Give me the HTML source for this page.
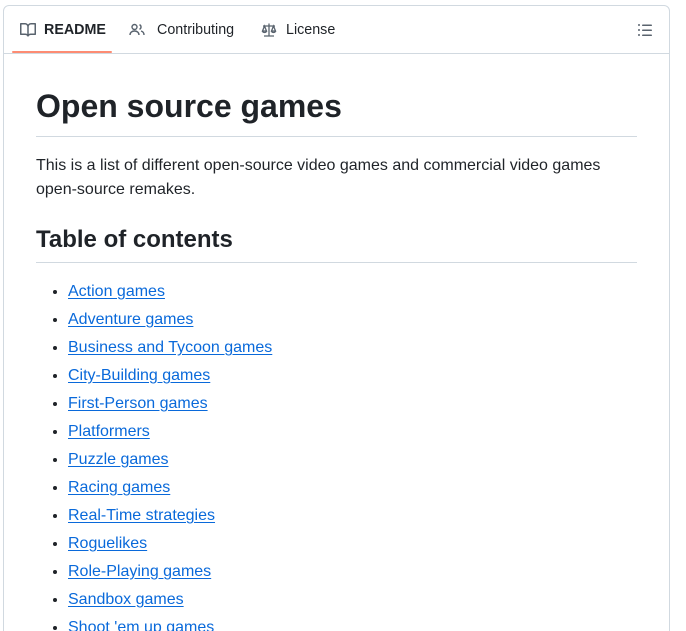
<!DOCTYPE html>
<html style="height:631px;overflow:hidden"><head><style>
body{margin:0;background:#fff;font-family:"Liberation Sans",sans-serif;color:#1f2328;height:631px;overflow:hidden;position:relative}
.box{position:absolute;left:3px;top:5px;width:665px;height:640px;border:1px solid #d1d9e0;border-radius:6px;}
.hdr{height:47px;border-bottom:1px solid #d1d9e0;position:relative;}
.tab{position:absolute;top:0;height:47px;display:flex;align-items:center;font-size:14.3px;color:#1f2328;}
.tab svg{margin-right:8px}
.ul{position:absolute;left:8px;top:45px;width:100px;height:2px;background:#fd8c73;border-radius:2px}
h1{position:absolute;left:32px;top:80px;margin:0;font-size:32px;font-weight:600;width:601px;border-bottom:1px solid #d1d9e0;height:50px;line-height:40px}
p{position:absolute;left:32px;top:148px;margin:0;font-size:16px;line-height:24px;width:601px}
h2{position:absolute;left:32px;top:219px;margin:0;font-size:24px;font-weight:600;width:601px;border-bottom:1px solid #d1d9e0;height:37px;line-height:30px}
ul{position:absolute;left:32px;top:272px;margin:0;padding-left:32px;font-size:16px;line-height:28px}
a{color:#0969da;text-decoration:underline;text-underline-offset:2px}
</style></head><body>
<div class="box">
<div class="hdr">
<div class="tab" style="left:16px;font-weight:700"><svg width="16" height="16" viewBox="0 0 16 16" fill="#59636e"><path d="M0 1.75A.75.75 0 0 1 .75 1h4.25c1.2 0 2.27.57 3 1.44A3.74 3.74 0 0 1 11 1h4.25a.75.75 0 0 1 .75.75v10.5a.75.75 0 0 1-.75.75h-4.51a2.25 2.25 0 0 0-2.120 1.5h-1.24A2.25 2.25 0 0 0 5.26 13H.75a.75.75 0 0 1-.75-.75Zm7.25 10.25V4.75A2.25 2.25 0 0 0 5 2.5H1.5v9h3.760c.72 0 1.4.18 1.99.5Zm1.5 0c.59-.32 1.27-.5 1.99-.5h3.76v-9H11a2.25 2.25 0 0 0-2.25 2.25Z"/></svg>README</div>
<div class="tab" style="left:125px"><svg width="16" height="16" viewBox="0 0 16 16" fill="none" stroke="#59636e" stroke-width="1.4"><circle cx="5.5" cy="5" r="2.5"/><path d="M1 13c0-2.5 2-4 4.5-4s4.5 1.5 4.5 4M10.5 2.7a2.5 2.5 0 0 1 0 4.6M12 9c1.8.5 3 1.8 3 4"/></svg><span style="margin-left:4px">Contributing</span></div>
<div class="tab" style="left:257px"><svg width="16" height="16" viewBox="0 0 16 16" fill="none" stroke="#59636e" stroke-width="1.3"><path d="M8 1.5v12M3 14h10M2 4h12M3.5 4 1.5 9h4zM12.5 4l-2 5h4zM1.5 9a2 1.5 0 0 0 4 0M10.5 9a2 1.5 0 0 0 4 0"/></svg><span style="margin-left:1px">License</span></div>
<svg style="position:absolute;right:16px;top:16px" width="16" height="16" viewBox="0 0 16 16" fill="#59636e"><path d="M5.75 2.5h8.5a.75.75 0 0 1 0 1.5h-8.5a.75.75 0 0 1 0-1.5Zm0 5h8.5a.75.75 0 0 1 0 1.5h-8.5a.75.75 0 0 1 0-1.5Zm0 5h8.5a.75.75 0 0 1 0 1.5h-8.5a.75.75 0 0 1 0-1.5ZM2 14a1 1 0 1 1 0-2 1 1 0 0 1 0 2Zm1-6a1 1 0 1 1-2 0 1 1 0 0 1 2 0ZM2 4a1 1 0 1 1 0-2 1 1 0 0 1 0 2Z"/></svg>
<div class="ul"></div>
</div>
<h1>Open source games</h1>
<p>This is a list of different open-source video games and commercial video games open-source remakes.</p>
<h2>Table of contents</h2>
<ul>
<li><a>Action games</a></li>
<li><a>Adventure games</a></li>
<li><a>Business and Tycoon games</a></li>
<li><a>City-Building games</a></li>
<li><a>First-Person games</a></li>
<li><a>Platformers</a></li>
<li><a>Puzzle games</a></li>
<li><a>Racing games</a></li>
<li><a>Real-Time strategies</a></li>
<li><a>Roguelikes</a></li>
<li><a>Role-Playing games</a></li>
<li><a>Sandbox games</a></li>
<li><a>Shoot 'em up games</a></li>
</ul>
</div>
</body></html>
